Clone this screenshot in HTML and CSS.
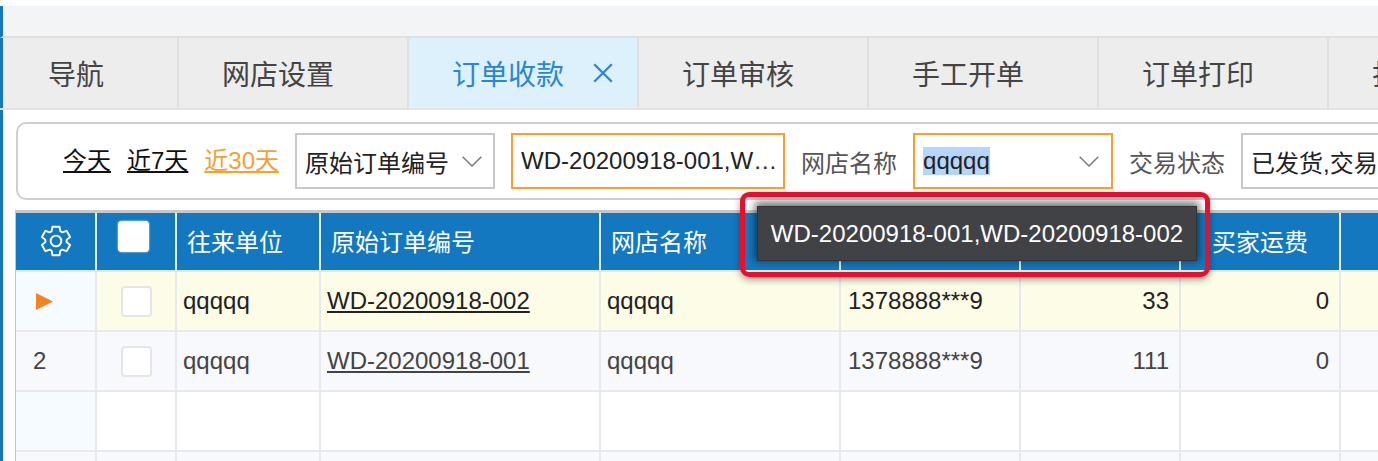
FILE: index.html
```html
<!DOCTYPE html>
<html lang="zh-CN">
<head>
<meta charset="utf-8">
<title>订单收款</title>
<link rel="stylesheet" href="styles.css">
</head>
<body>
<div class="page">
  <div class="topstrip"></div>
  <nav class="tabs">
    <div class="tab tab-first">导航</div>
    <div class="tab">网店设置</div>
    <div class="tab tab-active">订单收款<svg class="tab-close" width="20" height="20" viewBox="0 0 20 20"><path d="M1.2 1.2 18.8 18.8M18.8 1.2 1.2 18.8" fill="none" stroke="#2f86d6" stroke-width="2.3"/></svg></div>
    <div class="tab">订单审核</div>
    <div class="tab">手工开单</div>
    <div class="tab">订单打印</div>
    <div class="tab tab-last">打印</div>
  </nav>
  <main class="content">
    <section class="filter">
      <a class="quick">今天</a>
      <a class="quick">近7天</a>
      <a class="quick quick-on">近30天</a>
      <div class="field field-sel1">原始订单编号<svg class="chev" width="20" height="11" viewBox="0 0 20 11"><path d="M.7.7 10 10 19.3.7" fill="none" stroke="#777" stroke-width="1.4"/></svg></div>
      <div class="field field-focus field-input"><span class="ellip">WD-20200918-001,WD-20200918-002</span></div>
      <span class="label">网店名称</span>
      <div class="field field-focus field-shop"><span class="selected">qqqqq</span><svg class="chev" width="20" height="11" viewBox="0 0 20 11"><path d="M.7.7 10 10 19.3.7" fill="none" stroke="#777" stroke-width="1.4"/></svg></div>
      <span class="label">交易状态</span>
      <div class="field field-state">已发货,交易成功</div>
    </section>
    <section class="grid">
      <div class="row row-head">
        <div class="cell c0 center"><svg width="32" height="32" viewBox="-12 -12 24 24" fill="none" stroke="#fff" stroke-width="1.4" stroke-linejoin="round"><circle r="4"/><path d="M-2.66-10.67H2.66L3.25-7.31 4.7-6.47 7.91-7.64 10.57-3.03 7.96-.84V.84L10.57 3.03 7.91 7.64 4.7 6.47 3.25 7.31 2.66 10.67H-2.66L-3.25 7.31-4.7 6.47-7.91 7.64-10.57 3.03-7.96.84V-.84L-10.57-3.03-7.91-7.64-4.7-6.47-3.25-7.31Z"/></svg></div>
        <div class="cell c1 center"><span class="check check-head"></span></div>
        <div class="cell c2">往来单位</div>
        <div class="cell c3">原始订单编号</div>
        <div class="cell c4">网店名称</div>
        <div class="cell c5"></div>
        <div class="cell c6"></div>
        <div class="cell c7 center">买家运费</div>
        <div class="cell c8"></div>
      </div>
      <div class="row row-current">
        <div class="cell c0"><svg class="marker" width="17" height="17" viewBox="0 0 17 17"><path d="M0 0 17 8.5 0 17z" fill="#f58220"/></svg></div>
        <div class="cell c1 center"><span class="check"></span></div>
        <div class="cell c2">qqqqq</div>
        <div class="cell c3"><a class="link">WD-20200918-002</a></div>
        <div class="cell c4">qqqqq</div>
        <div class="cell c5">1378888***9</div>
        <div class="cell c6 num">33</div>
        <div class="cell c7 num">0</div>
        <div class="cell c8"></div>
      </div>
      <div class="row row-alt">
        <div class="cell c0">2</div>
        <div class="cell c1 center"><span class="check"></span></div>
        <div class="cell c2">qqqqq</div>
        <div class="cell c3"><a class="link">WD-20200918-001</a></div>
        <div class="cell c4">qqqqq</div>
        <div class="cell c5">1378888***9</div>
        <div class="cell c6 num">111</div>
        <div class="cell c7 num">0</div>
        <div class="cell c8"></div>
      </div>
      <div class="row">
        <div class="cell c0"></div><div class="cell c1"></div><div class="cell c2"></div><div class="cell c3"></div><div class="cell c4"></div><div class="cell c5"></div><div class="cell c6"></div><div class="cell c7"></div><div class="cell c8"></div>
      </div>
      <div class="row row-alt">
        <div class="cell c0"></div><div class="cell c1"></div><div class="cell c2"></div><div class="cell c3"></div><div class="cell c4"></div><div class="cell c5"></div><div class="cell c6"></div><div class="cell c7"></div><div class="cell c8"></div>
      </div>
    </section>
  </main>
  <div class="callout"><div class="tooltip">WD-20200918-001,WD-20200918-002</div></div>
</div>
</body>
</html>
```
FILE: styles.css
```css
* { box-sizing: border-box; }
html, body { margin: 0; height: 100%; background: #fff; overflow: hidden; }
body { font-family: "Liberation Sans", "Noto Sans CJK SC", Arial, sans-serif; font-size: 24px; color: #333; }
.page { position: relative; display: flex; flex-direction: column; width: 1378px; height: 461px; overflow: hidden; padding-top: 6px; }
.topstrip { flex: none; height: 32px; border-left: 3px solid #1478c0; background: #f3f4f6; border-bottom: 2px solid #e0e0e0; }
.tabs { flex: none; display: flex; height: 72px; background: linear-gradient(#1478c0, #1478c0) 0 0 / 3px 70px no-repeat, #ededee; box-shadow: inset 0 -2px 0 #e3e3e3; padding-left: 3px; padding-bottom: 2px; }
.tab { flex: none; width: 230px; display: flex; align-items: center; padding-left: 43px; border-right: 2px solid #e0e0e0; font-size: 28px; color: #444; }
.tab-first { width: 176px; padding-left: 45px; }
.tab-active { background: #dcf1fb; color: #2b86cf; gap: 29px; }
.tab-last { border-right: 0; }
.content { flex: 1; min-height: 0; border-left: 3px solid #1478c0; padding: 12px 0 0 13px; }
.filter { display: flex; align-items: center; height: 78px; width: 1500px; border: 2px solid #cfcfcf; border-radius: 10px; padding-left: 45px; color: #333; white-space: nowrap; }
.quick { color: #111; text-decoration: underline; text-underline-offset: 2px; margin: 0 16px 6px 0; }
.quick-on { color: #f5a033; }
.field { flex: none; height: 56px; display: flex; align-items: center; border: 2px solid #c8c8c8; padding: 0 8px; color: #222; background: #fff; }
.field-focus { border-color: #f5a033; }
.field-sel1 { width: 200px; justify-content: space-between; margin-right: 16px; padding-right: 11px; }
.field-input { width: 274px; padding-right: 4px; }
.ellip { display: block; overflow: hidden; white-space: nowrap; text-overflow: ellipsis; }
.field-shop { width: 200px; justify-content: space-between; padding-right: 12px; }
.selected { background: #b5d5fb; }
.label { margin: 0 16px; color: #555; }
.field-state { width: 200px; overflow: hidden; white-space: nowrap; }
.grid { width: 1500px; margin-top: 10px; margin-left: -1px; border-top: 3px solid #c5c8cb; border-left: 1px solid #c5c8cb; }
.row { display: flex; height: 60px; border-bottom: 2px solid #e8e9ec; }
.row-head { height: 59px; background: #1478c0; color: #fff; border-bottom: 2px solid #e2e8ee; }
.row-current { background: #fdfce6; color: #222; }
.row-alt { background: #f7f9fc; color: #444; }
.cell { flex: none; display: flex; align-items: center; padding-left: 10px; border-right: 2px solid #e8e9ec; white-space: nowrap; }
.row-head .cell { border-right-color: #e6f0f8; padding-bottom: 2px; }
.c0 { width: 81px; padding-left: 17px; background: #f5fbff; }
.row-head .c0, .row-alt .c0 { background: transparent; }
.c1 { width: 80px; }
.c2 { width: 144px; padding-left: 6px; }
.c3 { width: 280px; padding-left: 6px; }
.c4 { width: 240px; padding-left: 6px; }
.c5 { width: 180px; padding-left: 7px; }
.c6, .c7 { width: 160px; }
.c8 { width: 200px; }
.row-head .c2, .row-head .c3, .row-head .c4 { padding-left: 10px; }
.row-head .center { padding-left: 0; }
.center { justify-content: center; padding-left: 0; }
.num { justify-content: flex-end; padding: 0 10px 0 0; }
.marker { margin-left: 3px; }
.check { display: block; width: 31px; height: 31px; background: #fff; border: 2px solid #e5e5e5; border-radius: 4px; }
.check-head { margin: -8px 6px 0 0; border: 0; box-shadow: 0 0 2px #fff; filter: blur(.6px); }
.link { color: inherit; text-decoration: underline; text-underline-offset: 2px; }
.tab-close { flex: none; }
.chev { flex: none; }
.callout { position: absolute; left: 740px; top: 192px; width: 470px; height: 85px; border: 5px solid #e8112d; border-radius: 9px; box-shadow: 0 3px 7px rgba(0,0,0,.35); }
.tooltip { position: absolute; left: 12px; top: 9px; width: 440px; height: 55px; display: flex; align-items: center; justify-content: center; background: #414245; color: #fff; border: 1px solid #333; white-space: nowrap; box-shadow: 0 -2px 8px 2px rgba(0,0,0,.55); }
```
